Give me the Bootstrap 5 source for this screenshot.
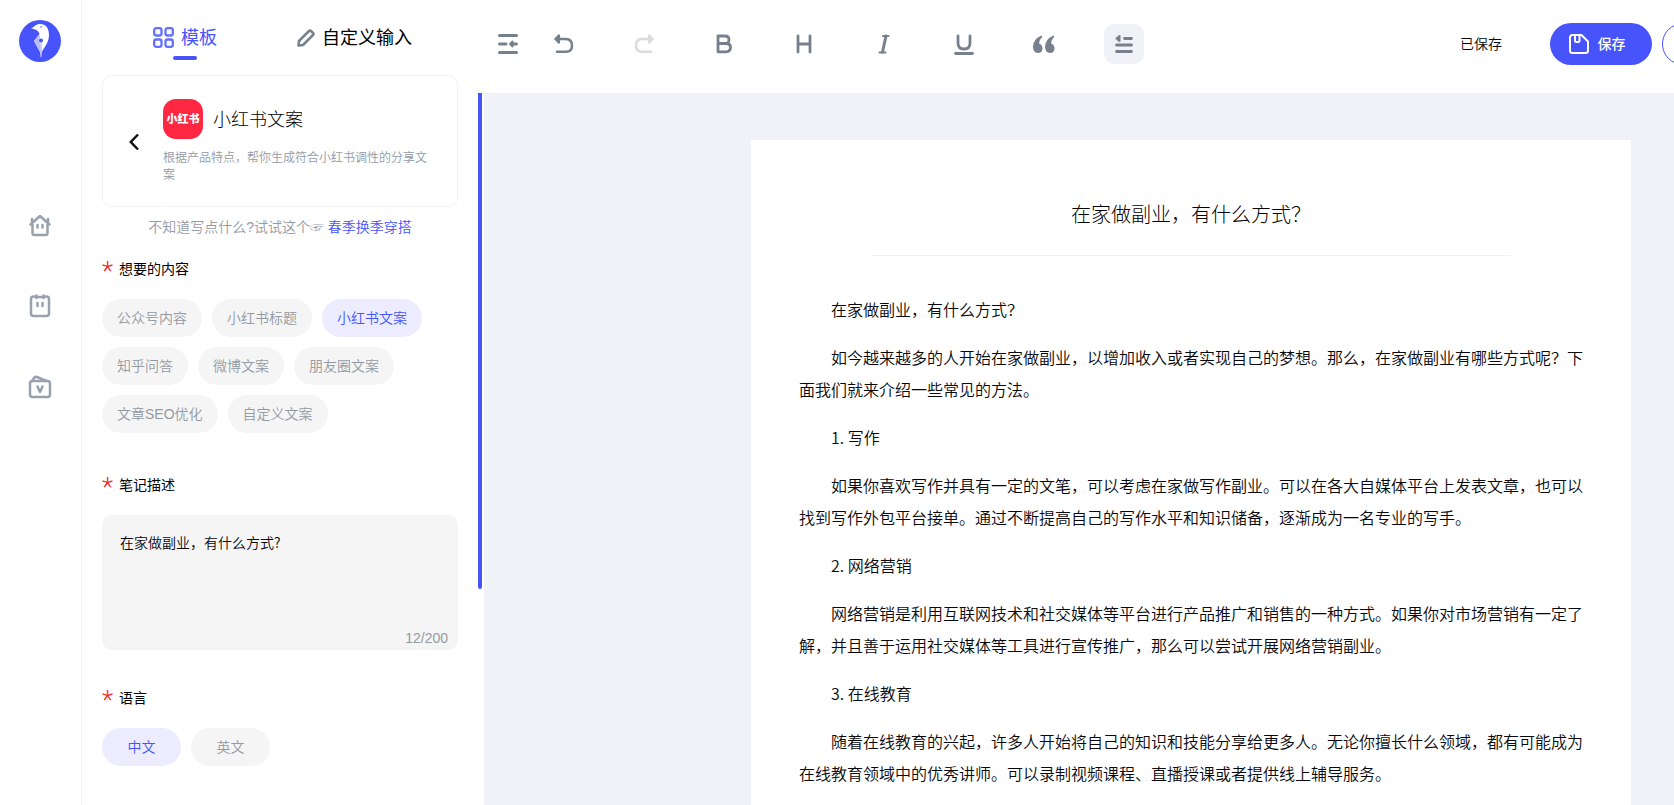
<!DOCTYPE html>
<html lang="zh-CN">
<head>
<meta charset="utf-8">
<meta name="viewport" content="width=device-width, initial-scale=1">
<title>小红书文案</title>
<link href="https://cdn.jsdelivr.net/npm/bootstrap@5.3.0/dist/css/bootstrap.min.css" rel="stylesheet">
<style>
  :root { --brand: #4754fc; --brand-soft: #edecff; --muted: #949aa3; --tool: #77808d; --canvas: #f1f2f7; --ink: #08080c; --thin: 350; }
  body { font-family: "Liberation Sans", "Noto Sans CJK SC", sans-serif; font-size: 14px; color: var(--ink); background: #fff; }
  a { color: var(--brand); text-decoration: none; }
  svg { display: block; flex: none; }
  .bare { border: 0; background: none; padding: 0; color: inherit; }

  .rail { width: 82px; border-right: 1px solid #f3f4f8; padding: 20px 2px 0 0; color: #98a1ae; }
  .rail-links { margin-top: 151px; gap: 57px; }
  .rail-links a { color: inherit; }

  .side { width: 396px; padding: 0 20px; }
  .tabs { height: 75px; padding-left: 51px; gap: 80px; }
  .tab-item { position: relative; gap: 7px; font-size: 18px; line-height: 24px; color: #000; }
  .tab-item.active { color: var(--brand); }
  .tab-item.active::after { content: ""; position: absolute; left: 50%; bottom: -10px; width: 24px; height: 4px; margin-left: -12px; border-radius: 2px; background: var(--brand); }

  .tpl { border: 1px solid #f1f2f7; border-radius: 10px; padding: 23px 30px 22px 26px; gap: 24px; }
  .tpl-logo { width: 40px; height: 40px; border-radius: 13px; background: #ff2741; color: #fff; font-size: 11px; font-weight: 900; }
  .tpl h1 { font-size: 18px; line-height: 24px; font-weight: 300; color: #000; margin: 2px 0 0 10px; }
  .tpl p { font-size: 12px; line-height: 17px; margin-top: 11px; color: var(--muted); font-weight: var(--thin); }
  .hint { line-height: 41px; color: var(--muted); font-weight: var(--thin); }

  .field-title { font-size: 14px; font-weight: 400; line-height: 42px; height: 42px; margin-bottom: 9px; gap: 6px; color: #000; float: none; }
  .star { font-family: Roboto, sans-serif; font-size: 26px; font-weight: 300; color: #ff2020; line-height: 46px; }
  .chips { gap: 10px; }
  .chip { --bs-btn-border-width: 0; --bs-btn-bg: #f5f5f5; --bs-btn-color: var(--muted);
    --bs-btn-hover-bg: var(--brand-soft); --bs-btn-hover-color: var(--brand);
    --bs-btn-active-bg: var(--brand-soft); --bs-btn-active-color: var(--brand);
    padding: 0 15px; min-width: 79px; font-size: 14px; font-weight: var(--thin); line-height: 38px; border-radius: 19px; }
  .note { height: 135px; border: 0; border-radius: 10px; background: #f5f5f5; padding: 17px 18px; font-family: "Noto Sans CJK SC", sans-serif; font-size: 14px; font-weight: var(--thin); line-height: 21px; color: var(--ink); resize: none; }
  .counter { position: absolute; right: 10px; bottom: 1px; line-height: 21px; color: var(--muted); }
  .gap-a { margin-top: 31px; } .gap-b { margin-top: 27px; }

  .track { width: 6px; padding-top: 93px; }
  .thumb { width: 4px; height: calc(100% - 216px); border-radius: 0 0 2px 2px; background: var(--brand); }

  .stage { min-width: calc(100% + 224px); background: var(--canvas); }
  .topbar { height: 93px; background: #fff; padding: 0 134px 5px 4px; color: var(--tool); }
  .tool { width: 40px; height: 40px; border-radius: 10px; }
  .tool.on { background: var(--canvas); }
  .tools { gap: 40px; margin-left: 16px; }
  .saved { font-weight: var(--thin); color: var(--ink); margin-right: 48px; }
  .pill { width: 102px; height: 42px; border-radius: 21px; }
  .pill-main { background: var(--brand); color: #fff; gap: 9px; padding-right: 8px; font-weight: 500; }
  .pill-line { border: 1px solid var(--brand); margin-left: 10px; background: #fff; }

  .paper { width: 880px; margin: 47px auto 0; padding: 0 48px; background: #fff; font-family: "Noto Sans CJK SC", sans-serif; font-weight: var(--thin); }
  .paper h2 { width: 640px; margin: 0 auto 37px; padding: 58px 0 25px; font-size: 20px; line-height: 32px; font-weight: 300; color: #000; border-bottom: 1px solid #f2f2f2; }
  .paper p { font-size: 16px; line-height: 32px; margin-bottom: 16px; text-indent: 2em; }
</style>
</head>
<body>
<div class="d-flex vh-100 overflow-hidden">

  <nav class="rail flex-shrink-0 d-flex flex-column align-items-center" aria-label="主导航">
    <a href="#" aria-label="首页">
      <svg width="42" height="42" viewBox="0 0 42 42"><circle cx="21" cy="21" r="21" fill="#4754fc"/>
        <path d="M12 8.500C15 7.500 16 4.300 20.500 4C27 3.800 30 8.500 30 15C30 22 25.500 27 22.800 32L22 38L21 32L15 21L20.500 14C20 11 17 9.300 12 8.500Z" fill="#fff"/>
        <path d="M20.500 14L15 21L21.500 32Z" fill="#b9bdfd"/><circle cx="22" cy="20.500" r="2" fill="#4754fc"/><path d="M22 22V37" stroke="#9ea5fd"/><circle cx="22" cy="7" r=".8" fill="#4754fc"/></svg>
    </a>
    <div class="rail-links d-flex flex-column align-items-center">
      <a href="#" aria-label="主页"><svg width="24" height="24" viewBox="0 0 24 24" fill="none" stroke="currentColor" stroke-width="2.500" stroke-linecap="round" stroke-linejoin="round"><path d="M2.500 11.500L12 3L21.500 11.500M4 8.500V6M20 8.500V6M4.500 12V20Q4.500 22 6.500 22H17.500Q19.500 22 19.500 20V12M9.500 12V14.500M14.500 12V14.500"/></svg></a>
      <a href="#" aria-label="文档"><svg width="24" height="24" viewBox="0 0 24 24" fill="none" stroke="currentColor" stroke-width="2.500" stroke-linecap="round"><path d="M6.500 2.500H5.500Q3 2.500 3 5V19.500Q3 22 5.500 22H18.500Q21 22 21 19.500V5Q21 2.500 18.500 2.500H17.500M8.500 3H15.500M8.500 1.500V4M15.500 1.500V4M9.500 9V12M14.500 9V12"/></svg></a>
      <a href="#" aria-label="会员"><svg width="24" height="24" viewBox="0 0 24 24" fill="none" stroke="currentColor" stroke-width="2.500" stroke-linecap="round" stroke-linejoin="round"><rect x="2" y="6" width="20" height="16" rx="2.500"/><path d="M4 6L6.500 2.500Q7.500 1.300 9 2L18.500 6M9.500 11.500L12 17L14.500 11.500"/></svg></a>
    </div>
  </nav>

  <aside class="side flex-shrink-0">
    <div class="tabs d-flex align-items-center">
      <button class="bare tab-item active d-flex align-items-center" type="button">
        <svg width="21" height="21" viewBox="0 0 21 21" fill="none" stroke="#6570fd" stroke-width="2.300"><rect x="1.200" y="1.200" width="7.300" height="7.300" rx="2"/><rect x="12.500" y="1.200" width="7.300" height="7.300" rx="2"/><rect x="1.200" y="12.500" width="7.300" height="7.300" rx="2"/><rect x="12.500" y="12.500" width="7.300" height="7.300" rx="2"/></svg>模板</button>
      <button class="bare tab-item d-flex align-items-center" type="button">
        <svg width="18" height="18" viewBox="0 0 18 18" fill="none" stroke="#77808d" stroke-width="2.500" stroke-linejoin="round"><path d="M1.500 16.500L2 12L12 2Q13 1 14 2L16 4Q17 5 16 6L6 16Z"/></svg>自定义输入</button>
    </div>

    <section class="tpl d-flex align-items-center">
      <button class="bare" type="button" aria-label="返回"><svg width="10" height="18" viewBox="0 0 10 18" fill="none" stroke="#111" stroke-width="2.500"><path d="M9 1.500L1.800 9L9 16.500"/></svg></button>
      <div>
        <div class="d-flex align-items-center">
          <span class="tpl-logo d-flex align-items-center justify-content-center">小红书</span>
          <h1>小红书文案</h1>
        </div>
        <p class="mb-0">根据产品特点，帮你生成符合小红书调性的分享文案</p>
      </div>
    </section>
    <div class="hint text-center">不知道写点什么?试试这个☞ <a href="#">春季换季穿搭</a></div>

    <fieldset>
      <legend class="field-title d-flex"><span class="star">*</span>想要的内容</legend>
      <div class="chips d-flex flex-wrap">
        <input class="btn-check" type="radio" name="kind" id="k1"><label class="btn chip" for="k1">公众号内容</label>
        <input class="btn-check" type="radio" name="kind" id="k2"><label class="btn chip" for="k2">小红书标题</label>
        <input class="btn-check" type="radio" name="kind" id="k3" checked><label class="btn chip" for="k3">小红书文案</label>
        <input class="btn-check" type="radio" name="kind" id="k4"><label class="btn chip" for="k4">知乎问答</label>
        <input class="btn-check" type="radio" name="kind" id="k5"><label class="btn chip" for="k5">微博文案</label>
        <input class="btn-check" type="radio" name="kind" id="k6"><label class="btn chip" for="k6">朋友圈文案</label>
        <input class="btn-check" type="radio" name="kind" id="k7"><label class="btn chip" for="k7">文章SEO优化</label>
        <input class="btn-check" type="radio" name="kind" id="k8"><label class="btn chip" for="k8">自定义文案</label>
      </div>
    </fieldset>

    <div class="gap-a">
      <label class="field-title d-flex" for="note"><span class="star">*</span>笔记描述</label>
      <div class="position-relative">
        <textarea class="form-control note" id="note" maxlength="200">在家做副业，有什么方式?</textarea>
        <span class="counter">12/200</span>
      </div>
    </div>

    <fieldset class="gap-b">
      <legend class="field-title d-flex"><span class="star">*</span>语言</legend>
      <div class="chips d-flex flex-wrap">
        <input class="btn-check" type="radio" name="lang" id="zh" checked><label class="btn chip" for="zh">中文</label>
        <input class="btn-check" type="radio" name="lang" id="en"><label class="btn chip" for="en">英文</label>
      </div>
    </fieldset>
  </aside>
  <div class="track flex-shrink-0"><div class="thumb"></div></div>

  <div class="flex-grow-1 overflow-hidden">
    <div class="stage d-flex flex-column min-vh-100">
      <header class="topbar d-flex align-items-center">
        <button class="bare tool d-flex align-items-center justify-content-center" type="button" aria-label="收起"><svg width="20" height="20" viewBox="0 0 20 20" fill="none" stroke="currentColor" stroke-width="3" stroke-linecap="round"><path d="M1.500 1.500H18.500M1.500 10H8M14 10H18.500M1.500 18.500H18.500"/><path d="M14.500 7.500V12.500L12 10Z" fill="currentColor" stroke-width="2" stroke-linejoin="round"/></svg></button>
        <div class="tools d-flex">
          <button class="bare tool d-flex align-items-center justify-content-center" type="button" aria-label="撤销"><svg width="20" height="20" viewBox="0 0 20 20" fill="none" stroke="currentColor" stroke-width="2.500" stroke-linecap="round" stroke-linejoin="round"><path d="M3 17.800H12Q18 17.800 18 11.500T12 5H3M4.800 1.500L1.500 5L4.800 8.500Z"/></svg></button>
          <button class="bare tool d-flex align-items-center justify-content-center" type="button" aria-label="重做"><svg width="20" height="20" viewBox="0 0 20 20" fill="none" stroke="#d9dbdf" stroke-width="2.500" stroke-linecap="round" stroke-linejoin="round"><path d="M17 17.800H8Q2 17.800 2 11.500T8 5H17M15.200 1.500L18.500 5L15.200 8.500Z"/></svg></button>
          <button class="bare tool d-flex align-items-center justify-content-center" type="button" aria-label="加粗"><svg width="20" height="20" viewBox="0 0 20 20" fill="none" stroke="currentColor" stroke-width="2.800" stroke-linejoin="round"><path d="M4 2H11Q15 2 15 5.800T11 9.500H4ZM4 9.500H12Q16.500 9.500 16.500 13.500T12 17.800H4Z"/></svg></button>
          <button class="bare tool d-flex align-items-center justify-content-center" type="button" aria-label="标题"><svg width="20" height="20" viewBox="0 0 20 20" fill="none" stroke="currentColor" stroke-width="2.800" stroke-linecap="round"><path d="M4 2V18M16 2V18M4 10H16"/></svg></button>
          <button class="bare tool d-flex align-items-center justify-content-center" type="button" aria-label="斜体"><svg width="20" height="20" viewBox="0 0 20 20" fill="none" stroke="currentColor" stroke-linecap="round"><path d="M12 2L8.500 18" stroke-width="3"/><path d="M9 2H14.500M5.500 18.500H11.500" stroke-width="2"/></svg></button>
          <button class="bare tool d-flex align-items-center justify-content-center" type="button" aria-label="下划线"><svg width="20" height="22" viewBox="0 0 20 22" fill="none" stroke="currentColor" stroke-width="2.800" stroke-linecap="round"><path d="M4 3V10Q4 16 10 16T16 10V3M1.500 20.500H18.500"/></svg></button>
          <button class="bare tool d-flex align-items-center justify-content-center" type="button" aria-label="引用"><svg width="22" height="20" viewBox="0 0 22 20" fill="currentColor"><path d="M8.500 1.500Q9.800 2.300 8.800 3.500Q6 6 6 9.500Q9.500 10.500 9.500 14.500Q9.200 19 5 19Q0 18.500 0 12.500Q.5 5 8.500 1.500Z"/><path d="M20.500 1.500Q21.800 2.300 20.800 3.500Q18 6 18 9.500Q21.500 10.500 21.500 14.500Q21.200 19 17 19Q12 18.500 12 12.500Q12.500 5 20.500 1.500Z"/></svg></button>
          <button class="bare tool on d-flex align-items-center justify-content-center" type="button" aria-label="缩进"><svg width="20" height="20" viewBox="0 0 20 20" fill="none" stroke="currentColor" stroke-width="2.800" stroke-linecap="round"><path d="M10.500 4.500H17.500M2.500 11H17.500M2.500 17.500H17.500"/><path d="M5.500 2V7L2.500 4.500Z" fill="currentColor" stroke-width="2" stroke-linejoin="round"/></svg></button>
        </div>
        <span class="saved ms-auto">已保存</span>
        <button class="bare pill pill-main d-flex align-items-center justify-content-center" type="button"><svg width="20" height="20" viewBox="0 0 20 20" fill="none" stroke="currentColor" stroke-width="2" stroke-linejoin="round"><path d="M3.500 1H12.500L19 7.500V16.500Q19 19 16.500 19H3.500Q1 19 1 16.500V3.500Q1 1 3.500 1ZM6 1V6.500Q6 8 7.500 8H9Q10.500 8 10.500 6.500V1"/></svg>保存</button>
        <button class="bare pill pill-line" type="button" aria-label="更多"></button>
      </header>

      <article class="paper flex-grow-1">
        <h2 class="text-center">在家做副业，有什么方式？</h2>
        <p>在家做副业，有什么方式？</p>
        <p>如今越来越多的人开始在家做副业，以增加收入或者实现自己的梦想。那么，在家做副业有哪些方式呢？下面我们就来介绍一些常见的方法。</p>
        <p>1. 写作</p>
        <p>如果你喜欢写作并具有一定的文笔，可以考虑在家做写作副业。可以在各大自媒体平台上发表文章，也可以找到写作外包平台接单。通过不断提高自己的写作水平和知识储备，逐渐成为一名专业的写手。</p>
        <p>2. 网络营销</p>
        <p>网络营销是利用互联网技术和社交媒体等平台进行产品推广和销售的一种方式。如果你对市场营销有一定了解，并且善于运用社交媒体等工具进行宣传推广，那么可以尝试开展网络营销副业。</p>
        <p>3. 在线教育</p>
        <p>随着在线教育的兴起，许多人开始将自己的知识和技能分享给更多人。无论你擅长什么领域，都有可能成为在线教育领域中的优秀讲师。可以录制视频课程、直播授课或者提供线上辅导服务。</p>
      </article>
    </div>
  </div>
</div>
<script src="https://cdn.jsdelivr.net/npm/bootstrap@5.3.0/dist/js/bootstrap.bundle.min.js"></script>
</body>
</html>
